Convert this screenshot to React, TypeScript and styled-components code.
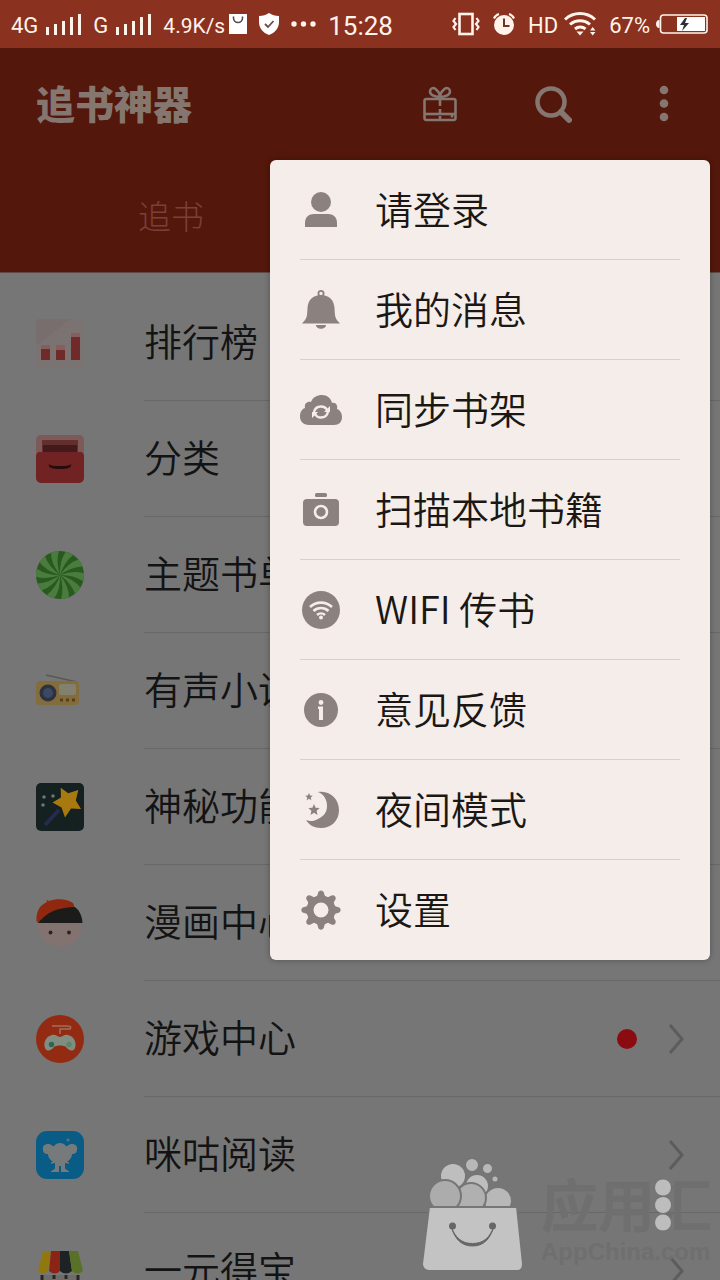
import React from 'react';
import styled, { createGlobalStyle } from 'styled-components';

const GlobalStyle = createGlobalStyle`
  * { box-sizing: border-box; }
  body {
    margin: 0;
    background: #767676;
    font-family: Roboto, "Noto Sans CJK SC", sans-serif;
  }
  button { font: inherit; color: inherit; background: none; border: 0; padding: 0; cursor: pointer; }
  svg { display: block; flex: none; }
`;

const Screen = styled.div`
  position: relative;
  display: flex;
  flex-direction: column;
  height: 100vh;
  overflow: hidden;
  background: #767676;
`;

const StatusBar = styled.div`
  display: flex;
  justify-content: space-between;
  flex: none;
  height: 48px;
  padding: 0 12px 0 11px;
  background: #8a3120;
  color: #fff3ea;
`;

const StatusGroup = styled.div<{ $gap: number }>`
  display: flex;
  align-items: center;
  gap: ${(p) => p.$gap}px;
`;

const StatusText = styled.span<{ $size: number }>`
  font-size: ${(p) => p.$size}px;
  line-height: 28px;
  padding-top: 4px;
`;

const Header = styled.header`
  flex: none;
  background: #54170b;
  border-bottom: 1px solid #5f4a46;
`;

const Toolbar = styled.div`
  display: flex;
  align-items: center;
  justify-content: space-between;
  height: 112px;
  padding: 0 32px 0 36px;
`;

const Title = styled.h1`
  margin: 0;
  padding-bottom: 5px;
  font: 900 39px/56px "Noto Sans CJK SC", sans-serif;
  color: #857670;
`;

const Actions = styled.div`
  display: flex;
  gap: 64px;
`;

const IconButton = styled.button`
  display: grid;
  place-items: center;
  width: 48px;
  height: 48px;
`;

const Tabs = styled.nav`
  display: flex;
  height: 112px;
  padding-left: 138px;
`;

const Tab = styled.button`
  padding-bottom: 2px;
  font: 300 33px/48px "Noto Sans CJK SC", sans-serif;
  color: #7a403a;
`;

const List = styled.ul`
  list-style: none;
  margin: 0;
  padding: 12px 0 0;
`;

const Row = styled.li`
  display: flex;
  align-items: center;
  gap: 60px;
  height: 116px;
  padding-left: 36px;
`;

const RowLink = styled.a`
  flex: 1;
  display: flex;
  align-items: center;
  height: 100%;
  padding-right: 33px;
  border-bottom: 1px solid #686868;
  color: #131313;
  font: 350 38px/56px "Noto Sans CJK SC", sans-serif;
  text-decoration: none;
`;

const RowLabel = styled.span`
  flex: 1;
  padding-bottom: 6px;
`;

const Unread = styled.span`
  width: 20px;
  height: 20px;
  margin-right: 30px;
  border-radius: 50%;
  background: #8b0c10;
`;

const Menu = styled.div`
  position: absolute;
  top: 160px;
  right: 10px;
  width: 440px;
  padding: 0 30px;
  border-radius: 6px;
  background: #f5ede9;
  box-shadow: 0 0 6px rgba(0, 0, 0, 0.3);
`;

const MenuItem = styled.button`
  display: flex;
  align-items: center;
  gap: 33px;
  width: 100%;
  height: 100px;
  border-bottom: 1px solid #d9cfcc;
  color: #1a1714;
  font: 350 38px/56px "Noto Sans CJK SC", sans-serif;
  text-align: left;
  &:last-child { border-bottom-color: transparent; }
`;

const MenuLabel = styled.span`
  padding-bottom: 4px;
`;

const Watermark = styled.div`
  position: absolute;
  right: 8px;
  bottom: 10px;
  display: flex;
  gap: 18px;
  align-items: flex-end;
  pointer-events: none;
`;

const WatermarkText = styled.div`
  position: relative;
  color: #6f6f6f;
`;

const WatermarkName = styled.div`
  font: 700 57px/64px "Noto Sans CJK SC", sans-serif;
`;

const WatermarkSite = styled.div`
  font: 700 24px/36px "Liberation Sans", sans-serif;
`;

const WatermarkDots = styled.div`
  position: absolute;
  top: 9px;
  right: 41px;
`;

const Signal = () => (
  <svg width="35" height="22" viewBox="0 0 35 22" fill="currentColor">
    {[8, 11, 14, 18, 21].map((h, i) => (
      <rect key={h} x={i * 8} y={22 - h} width="3" height={h} />
    ))}
  </svg>
);

const StatusBag = () => (
  <svg width="18" height="20" viewBox="0 0 18 20">
    <path d="M0 0h18v20H0z" fill="#fff" />
    <path d="M4.500 2.500v1.500a4.500 4.500 0 0 0 9 0V2.500" fill="none" stroke="#5a4a50" strokeWidth="1.600" />
  </svg>
);

const Shield = () => (
  <svg width="20" height="22" viewBox="0 0 20 22">
    <path d="M10 0c3 2 6 3 10 3v6c0 6-4 11-10 13C4 20 0 15 0 9V3c4 0 7-1 10-3z" fill="#fff" />
    <path d="m6 11 3 3 5.500-6" fill="none" stroke="#6b4a45" strokeWidth="1.800" />
  </svg>
);

const More = () => (
  <svg width="25" height="6" viewBox="0 0 25 6" fill="currentColor">
    <circle cx="3" cy="3" r="2.700" /><circle cx="12.500" cy="3" r="2.700" /><circle cx="22" cy="3" r="2.700" />
  </svg>
);

const Vibrate = () => (
  <svg width="28" height="24" viewBox="0 0 28 24" fill="none" stroke="currentColor">
    <rect x="7.500" y="2" width="13" height="20" strokeWidth="2.600" />
    <path d="M3.500 6 1.500 9l2.500 3-2.500 3 2 3M24.500 6l2 3-2.500 3 2.500 3-2 3" strokeWidth="2.200" />
  </svg>
);

const Alarm = () => (
  <svg width="24" height="24" viewBox="0 0 24 24" fill="none" stroke="currentColor">
    <circle cx="12" cy="13" r="10" fill="currentColor" stroke="none" />
    <path d="M2 6.500A8 8 0 0 1 7 2M17 2a8 8 0 0 1 5 4.500" strokeWidth="2.200" />
    <path d="M12 6.500V14h5.500" stroke="#6d3428" strokeWidth="2" />
  </svg>
);

const StatusWifi = () => (
  <svg width="33" height="24" viewBox="0 0 33 24" fill="none" stroke="currentColor" strokeWidth="3">
    <path d="M1 7.500a22 22 0 0 1 30 0M6 12.500a15 15 0 0 1 20 0M11 17a8 8 0 0 1 10.500 0" />
    <path d="M12.500 19.500h7L16 23.500z" fill="currentColor" stroke="none" />
    <path d="m26 18.500 2.700-3.500 2.700 3.500zM26 20l2.700 3.500 2.700-3.500z" fill="currentColor" stroke="none" />
  </svg>
);

const Battery = () => (
  <svg width="52" height="20" viewBox="0 0 52 20">
    <path d="M3.500 6C1 6 0 8 0 10s1 4 3.500 4z" fill="#fff3ea" />
    <rect x="4.500" y="1" width="46.500" height="18" rx="3" fill="none" stroke="#fff3ea" strokeWidth="1.600" />
    <path d="M21 3h28v14H21z" fill="#fff" />
    <path d="m29 4-5 7h4l-2 6 7-8h-4l2-5z" fill="#2a2f38" />
  </svg>
);

const Gift = () => (
  <svg width="36" height="38" viewBox="0 0 36 38" fill="none" stroke="#857670" strokeWidth="2.600">
    <rect x="2.500" y="14" width="31" height="21" rx="2" />
    <path d="M3 29h30" />
    <path d="M18 14v7M18 24v4M18 31v4" />
    <path d="M18 12C12 12 8 9.500 8 6.500S11 2 13.500 4 18 9 18 12c0-3 2-6 4.500-8S28 3.500 28 6.500 24 12 18 12z" />
    <circle cx="30" cy="31" r="1.500" fill="#857670" stroke="none" />
  </svg>
);

const Search = () => (
  <svg width="40" height="40" viewBox="0 0 40 40" fill="none" stroke="#857670">
    <circle cx="19" cy="18" r="13.500" strokeWidth="4.500" />
    <path d="m29 28 8 8" strokeWidth="6" strokeLinecap="round" />
  </svg>
);

const Overflow = () => (
  <svg width="10" height="38" viewBox="0 0 10 38" fill="#857670">
    <circle cx="5" cy="5" r="4.300" /><circle cx="5" cy="18.500" r="4.300" /><circle cx="5" cy="32" r="4.300" />
  </svg>
);

const Chevron = () => (
  <svg width="20" height="32" viewBox="0 0 20 32" fill="none" stroke="#5c5c5c" strokeWidth="3">
    <path d="m3 2 12 14L3 30" />
  </svg>
);

const listArt = {
  rank: (
    <>
      <rect width="48" height="48" rx="4" fill="#786e6d" />
      <path d="M0 27 34 0h10a4 4 0 0 1 4 4v40a4 4 0 0 1-4 4H4a4 4 0 0 1-4-4z" fill="#7c7675" opacity=".6" />
      <path d="M5 26h9v4H5zM20 26h9v5h-9zM35 14h9v4h-9z" fill="#865f5c" />
      <path d="M5 30h9v11H5zM20 31h9v10h-9zM35 18h9v23h-9z" fill="#712a2a" />
    </>
  ),
  drawer: (
    <>
      <rect width="48" height="30" rx="5" fill="#7d5957" />
      <path d="M6 5h36v12H6z" fill="#612f2e" />
      <path d="M7 10h34v8H7z" fill="#44191a" />
      <path d="M5 17h38a4 4 0 0 1 5 4v22a5 5 0 0 1-5 5H5a5 5 0 0 1-5-5V21a4 4 0 0 1 5-4z" fill="#712324" />
      <path d="M13 29c2 2 5 2 11 2s9 0 11-2c1 3-2 5-11 5s-12-2-11-5z" fill="#260d0d" />
    </>
  ),
  swirl: (
    <g transform="translate(24 24)">
      <circle r="24" fill="#28591f" />
      {Array.from({ length: 10 }, (_, i) => (
        <path
          key={i}
          transform={`rotate(${i * 36 + 8})`}
          d="M0 0Q13-7 23.500-5A24 24 0 0 1 23.800 3Q13-2 0 0z"
          fill="#4a7c3d"
        />
      ))}
    </g>
  ),
  radio: (
    <>
      <path d="m10 8 31 7" stroke="#5b5850" strokeWidth="1.500" />
      <rect y="14" width="43" height="24" rx="4" fill="#846d3c" />
      <circle cx="12" cy="26" r="8.500" fill="#2d3240" />
      <circle cx="12" cy="26" r="5" fill="#3c4964" />
      <rect x="23" y="17" width="17" height="11" rx="2" fill="#82806f" />
      <path d="M24 33h3M30 33h3M36 33h3" stroke="#5a3d1c" strokeWidth="3" />
    </>
  ),
  magic: (
    <>
      <rect width="48" height="48" rx="5" fill="#152020" />
      <path d="m9 42 14-15" stroke="#27294f" strokeWidth="4" />
      <path d="m24.700 4.700 7.500 5.500L42.300 7l-2.500 10.500L45 26l-10-.5-6 9-3.500-10-9-5 8.500-5z" fill="#a8790f" />
      <g fill="#667a74"><circle cx="8" cy="14" r="1.800" /><circle cx="17" cy="13" r="1.800" /><circle cx="7" cy="22" r="1.800" /></g>
    </>
  ),
  face: (
    <>
      <path d="M2 23h44c1 15-9 24.500-22 24.500S1 38 2 23z" fill="#837370" />
      <path d="M2 24C8 12 22 7 37 7c6 3 9 9 9.500 17z" fill="#1b1b19" />
      <path d="M.5 22C0 12 4 6 11 3l-.5-2L13 2c8-3 19-2 24 2 1 1 1 3 1 4C20 9 12 13 2 24z" fill="#8f280e" />
      <circle cx="14.500" cy="33.500" r="1.900" fill="#30201d" /><circle cx="33" cy="33.500" r="1.900" fill="#30201d" />
    </>
  ),
  game: (
    <>
      <circle cx="24" cy="24" r="24" fill="#932b12" />
      <path d="M16 11h14c3 0 6 0 4 3H24v5" fill="none" stroke="#a76c5c" strokeWidth="1.500" />
      <path d="M16 20c4-1 5 2 8 2s4-3 8-2c6 1 9 8 7 13-2 4-6 3-9-1-2-2-10-2-12 0-3 4-7 5-9 1-2-5 1-12 7-13z" fill="#828d82" />
      <circle cx="15.500" cy="29.500" r="2.700" fill="#2e6554" /><circle cx="33" cy="29.500" r="2.700" fill="#5c8667" />
    </>
  ),
  migu: (
    <>
      <rect width="48" height="48" rx="11" fill="#085c85" />
      <path d="M7 19c-1-4 2-6 5-6 4 0 4 3 6 2 3-4 9-4 12 0 2 1 2-2 6-2 3 0 6 2 5 6 0 4-4 4-5 4 0 5-5 8-7 9v5c0 2 4 2 4 4h-8v-6h-2v6h-8c0-2 4-2 4-4v-5c-2-1-7-4-7-9-1 0-5 0-5-4z" fill="#777a7b" />
      <path d="m15 32 5-1M33 32l-5-1" stroke="#777a7b" strokeWidth="1.500" />
      <circle cx="32" cy="9" r="1.500" fill="#57767f" />
    </>
  ),
  shop: (
    <>
      <path d="M7 4h8L12 24q-5 5-10 0z" fill="#91780e" />
      <path d="M15 4h9v20q-5 5-11 0z" fill="#8c2416" />
      <path d="M24 4h9l3 20q-6 5-12 0z" fill="#1d2224" />
      <path d="M33 4h9l5 20q-6 5-11 0z" fill="#587126" />
      <path d="M6 28h36v18H6z" fill="#6d6c68" />
      <path d="M6 28v18M18 28v4M30 28v4M42 28v18" stroke="#262626" strokeWidth="3" />
    </>
  ),
};

const starPoints = (cx: number, cy: number, r: number) =>
  Array.from({ length: 10 }, (_, i) => {
    const rad = i % 2 ? r * 0.45 : r;
    const a = (Math.PI * i) / 5 - Math.PI / 2;
    return `${(cx + rad * Math.cos(a)).toFixed(1)},${(cy + rad * Math.sin(a)).toFixed(1)}`;
  }).join(' ');

const paper = '#f5ede9';

const menuArt = {
  user: (
    <>
      <circle cx="21" cy="13" r="10" />
      <path d="M5 38v-4c0-6 4-9 9-9h14c5 0 9 3 9 9v4z" />
    </>
  ),
  bell: (
    <>
      <circle cx="21" cy="4.500" r="2.600" fill="none" stroke="#8b8280" strokeWidth="1.800" />
      <path d="M21 6c8 0 13 5 13.500 13 .5 8 0 10 5.500 15.500H2C7.500 29 7 27 7.500 19 8 11 13 6 21 6zM16 36h10c0 5-10 5-10 0z" />
    </>
  ),
  cloud: (
    <>
      <path d="M9 36C3 36 0 32 0 27.500 0 23 2 20 5 19c-1-5 3-7 6-6 2-5 6-7 11-7s9 3 10 8c4-1 6 3 5 6 3 1 5 4 5 8 0 5-3 8-8 8z" />
      <g fill="none" stroke={paper} strokeWidth="2.400">
        <path d="M14 23c1-4 4-5.500 7-5.500s5 1.500 6 3.500M28 23c-1 4-4 5.500-7 5.500s-5-1.500-6-3.500" />
      </g>
      <path d="m30 17v6h-6zM12 29v-6h6z" fill={paper} />
    </>
  ),
  camera: (
    <>
      <rect x="15" y="4" width="12" height="4" rx="1.500" />
      <rect x="3" y="10" width="36" height="27" rx="4" />
      <circle cx="21" cy="23" r="6" fill="none" stroke={paper} strokeWidth="2.600" />
    </>
  ),
  wifi: (
    <>
      <circle cx="21" cy="21" r="19" />
      <g fill="none" stroke={paper} strokeWidth="2.600">
        <path d="M10 18a16 16 0 0 1 22 0M13.500 22a11 11 0 0 1 15 0M17 26a6 6 0 0 1 8 0" />
      </g>
      <circle cx="21" cy="28.500" r="2" fill={paper} />
    </>
  ),
  info: (
    <>
      <circle cx="21" cy="21" r="17" />
      <circle cx="21" cy="13.500" r="2.400" fill={paper} />
      <path d="M18 17.500h5V31h-4V20h-1z" fill={paper} />
    </>
  ),
  moon: (
    <>
      <path d="M18 3c12-2 21 7 21 18s-8 18-18 18c-7 0-12-3-15-8 4 2 9 1 12-1 6-3 9-7 9-13S24 5 18 3z" />
      <polygon points={starPoints(14, 21, 6)} />
      <polygon points={starPoints(9, 8, 4)} />
    </>
  ),
  gear: (
    <>
      {Array.from({ length: 8 }, (_, i) => (
        <path key={i} transform={`rotate(${i * 45} 21 21)`} d="M15 9c2.500-2 2.500-3 3-5 .6-3.500 5.400-3.500 6 0 .5 2 .5 3 3 5z" />
      ))}
      <circle cx="21" cy="21" r="11" fill="none" stroke="#8b8280" strokeWidth="7" />
    </>
  ),
};

const rows: { art: keyof typeof listArt; label: string; unread?: boolean }[] = [
  { art: 'rank', label: '排行榜' },
  { art: 'drawer', label: '分类' },
  { art: 'swirl', label: '主题书单' },
  { art: 'radio', label: '有声小说' },
  { art: 'magic', label: '神秘功能' },
  { art: 'face', label: '漫画中心' },
  { art: 'game', label: '游戏中心', unread: true },
  { art: 'migu', label: '咪咕阅读' },
  { art: 'shop', label: '一元得宝' },
];

const menuItems: { art: keyof typeof menuArt; label: string }[] = [
  { art: 'user', label: '请登录' },
  { art: 'bell', label: '我的消息' },
  { art: 'cloud', label: '同步书架' },
  { art: 'camera', label: '扫描本地书籍' },
  { art: 'wifi', label: 'WIFI 传书' },
  { art: 'info', label: '意见反馈' },
  { art: 'moon', label: '夜间模式' },
  { art: 'gear', label: '设置' },
];

const BagLogo = () => (
  <svg width="101" height="112" viewBox="0 0 101 112" fill="#b8b8b8" stroke="#767676" strokeWidth="2">
    <circle cx="50" cy="7" r="7" /><circle cx="65.500" cy="10.500" r="5.500" /><circle cx="73" cy="21" r="3.500" />
    <circle cx="31" cy="18" r="13" fill="#bebebe" /><circle cx="55" cy="28" r="12" fill="#bebebe" />
    <circle cx="76" cy="43" r="14" /><circle cx="49" cy="40" r="15" fill="#b0b0b0" /><circle cx="23" cy="38" r="16" fill="#acacac" />
    <path d="M7 49h88l6 57c0 4-2 7-6 7H7c-4 0-7-3-7-7z" fill="#c3c3c3" />
    <circle cx="30.500" cy="68" r="3.500" fill="#666" stroke="none" /><circle cx="70.500" cy="68" r="3.500" fill="#666" stroke="none" />
    <path d="M29 68c4 12 11 17.500 21.500 17.500S68 80 72 68c-4 14-11 20-21.500 20S33 82 29 68z" fill="#666" stroke="#666" strokeWidth="1" />
  </svg>
);

export default function App() {
  return (
    <>
      <GlobalStyle />
      <Screen>
        <StatusBar>
          <StatusGroup $gap={12}>
            <StatusGroup $gap={8}><StatusText $size={22}>4G</StatusText><Signal /></StatusGroup>
            <StatusGroup $gap={8}><StatusText $size={22}>G</StatusText><Signal /></StatusGroup>
            <StatusGroup $gap={4}><StatusText $size={21}>4.9K/s</StatusText><StatusBag /></StatusGroup>
            <Shield />
            <More />
            <StatusText $size={26}>15:28</StatusText>
          </StatusGroup>
          <StatusGroup $gap={12}>
            <Vibrate />
            <Alarm />
            <StatusGroup $gap={6}><StatusText $size={22}>HD</StatusText><StatusWifi /></StatusGroup>
            <StatusGroup $gap={6}><StatusText $size={22}>67%</StatusText><Battery /></StatusGroup>
          </StatusGroup>
        </StatusBar>
        <Header>
          <Toolbar>
            <Title>追书神器</Title>
            <Actions>
              <IconButton aria-label="礼物"><Gift /></IconButton>
              <IconButton aria-label="搜索"><Search /></IconButton>
              <IconButton aria-label="更多"><Overflow /></IconButton>
            </Actions>
          </Toolbar>
          <Tabs><Tab>追书</Tab></Tabs>
        </Header>
        <List>
          {rows.map((row) => (
            <Row key={row.label}>
              <svg width="48" height="48" viewBox="0 0 48 48">{listArt[row.art]}</svg>
              <RowLink href="#">
                <RowLabel>{row.label}</RowLabel>
                {row.unread && <Unread />}
                <Chevron />
              </RowLink>
            </Row>
          ))}
        </List>
        <Menu>
          {menuItems.map((item) => (
            <MenuItem key={item.label}>
              <svg width="42" height="42" viewBox="0 0 42 42" fill="#8b8280">{menuArt[item.art]}</svg>
              <MenuLabel>{item.label}</MenuLabel>
            </MenuItem>
          ))}
        </Menu>
        <Watermark>
          <BagLogo />
          <WatermarkText>
            <WatermarkName>应用汇</WatermarkName>
            <WatermarkSite>AppChina.com</WatermarkSite>
            <WatermarkDots>
              <svg width="16" height="52" viewBox="0 0 16 52" fill="#bdbdbd">
                <circle cx="8" cy="8.500" r="8" /><circle cx="8" cy="26" r="8" /><circle cx="8" cy="43.500" r="8" />
              </svg>
            </WatermarkDots>
          </WatermarkText>
        </Watermark>
      </Screen>
    </>
  );
}
